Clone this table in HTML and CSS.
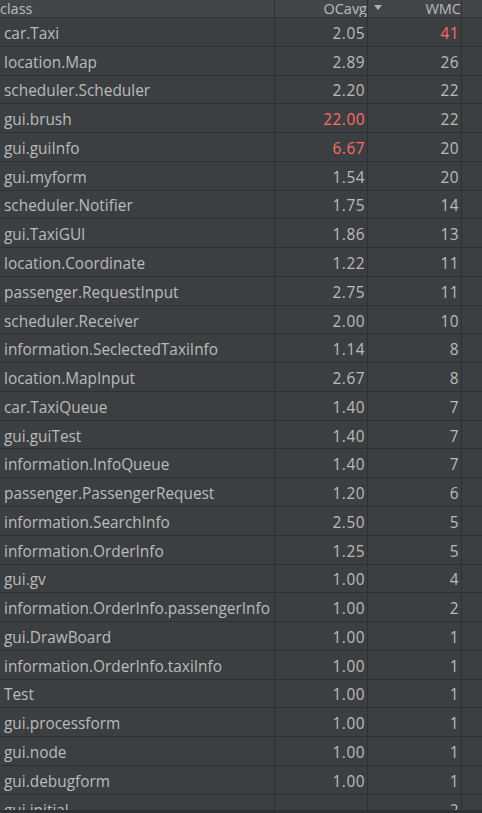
FILE: index.html
```html
<!DOCTYPE html>
<html>
<head>
<meta charset="utf-8">
<link rel="stylesheet" href="styles.css">
</head>
<body>
<div class="table">
  <div class="row head">
    <div class="c name">class</div>
    <div class="c num">OCavg</div>
    <div class="c num wmc-h"><span class="sort"></span><span>WMC</span></div>
    <div class="c rest"></div>
  </div>
  <div class="row"><div class="c name">car.Taxi</div><div class="c num">2.05</div><div class="c num red">41</div><div class="c rest"></div></div>
  <div class="row"><div class="c name">location.Map</div><div class="c num">2.89</div><div class="c num">26</div><div class="c rest"></div></div>
  <div class="row"><div class="c name">scheduler.Scheduler</div><div class="c num">2.20</div><div class="c num">22</div><div class="c rest"></div></div>
  <div class="row"><div class="c name">gui.brush</div><div class="c num red">22.00</div><div class="c num">22</div><div class="c rest"></div></div>
  <div class="row"><div class="c name">gui.guiInfo</div><div class="c num red">6.67</div><div class="c num">20</div><div class="c rest"></div></div>
  <div class="row"><div class="c name">gui.myform</div><div class="c num">1.54</div><div class="c num">20</div><div class="c rest"></div></div>
  <div class="row"><div class="c name">scheduler.Notifier</div><div class="c num">1.75</div><div class="c num">14</div><div class="c rest"></div></div>
  <div class="row"><div class="c name">gui.TaxiGUI</div><div class="c num">1.86</div><div class="c num">13</div><div class="c rest"></div></div>
  <div class="row"><div class="c name">location.Coordinate</div><div class="c num">1.22</div><div class="c num">11</div><div class="c rest"></div></div>
  <div class="row"><div class="c name">passenger.RequestInput</div><div class="c num">2.75</div><div class="c num">11</div><div class="c rest"></div></div>
  <div class="row"><div class="c name">scheduler.Receiver</div><div class="c num">2.00</div><div class="c num">10</div><div class="c rest"></div></div>
  <div class="row"><div class="c name">information.SeclectedTaxiInfo</div><div class="c num">1.14</div><div class="c num">8</div><div class="c rest"></div></div>
  <div class="row"><div class="c name">location.MapInput</div><div class="c num">2.67</div><div class="c num">8</div><div class="c rest"></div></div>
  <div class="row"><div class="c name">car.TaxiQueue</div><div class="c num">1.40</div><div class="c num">7</div><div class="c rest"></div></div>
  <div class="row"><div class="c name">gui.guiTest</div><div class="c num">1.40</div><div class="c num">7</div><div class="c rest"></div></div>
  <div class="row"><div class="c name">information.InfoQueue</div><div class="c num">1.40</div><div class="c num">7</div><div class="c rest"></div></div>
  <div class="row"><div class="c name">passenger.PassengerRequest</div><div class="c num">1.20</div><div class="c num">6</div><div class="c rest"></div></div>
  <div class="row"><div class="c name">information.SearchInfo</div><div class="c num">2.50</div><div class="c num">5</div><div class="c rest"></div></div>
  <div class="row"><div class="c name">information.OrderInfo</div><div class="c num">1.25</div><div class="c num">5</div><div class="c rest"></div></div>
  <div class="row"><div class="c name">gui.gv</div><div class="c num">1.00</div><div class="c num">4</div><div class="c rest"></div></div>
  <div class="row"><div class="c name">information.OrderInfo.passengerInfo</div><div class="c num">1.00</div><div class="c num">2</div><div class="c rest"></div></div>
  <div class="row"><div class="c name">gui.DrawBoard</div><div class="c num">1.00</div><div class="c num">1</div><div class="c rest"></div></div>
  <div class="row"><div class="c name">information.OrderInfo.taxiInfo</div><div class="c num">1.00</div><div class="c num">1</div><div class="c rest"></div></div>
  <div class="row"><div class="c name">Test</div><div class="c num">1.00</div><div class="c num">1</div><div class="c rest"></div></div>
  <div class="row"><div class="c name">gui.processform</div><div class="c num">1.00</div><div class="c num">1</div><div class="c rest"></div></div>
  <div class="row"><div class="c name">gui.node</div><div class="c num">1.00</div><div class="c num">1</div><div class="c rest"></div></div>
  <div class="row"><div class="c name">gui.debugform</div><div class="c num">1.00</div><div class="c num">1</div><div class="c rest"></div></div>
  <div class="row"><div class="c name">gui.initial</div><div class="c num"></div><div class="c num">2</div><div class="c rest"></div></div>
</div>
<div class="bottom"></div>
</body>
</html>
```
FILE: styles.css
```css
html, body {
  margin: 0;
  padding: 0;
  background: #3c3f41;
  width: 482px;
  height: 813px;
  overflow: hidden;
}
.table {
  height: 810px;
  overflow: hidden;
  font-family: "Open Sans", "Noto Sans", sans-serif;
  font-size: 15.4px;
  color: #bbbbbb;
}
.row {
  display: grid;
  grid-template-columns: 275px 93px 94px 20px;
  height: 28.77px;
  box-sizing: border-box;
  border-bottom: 1px solid #2e3032;
  align-items: stretch;
}
.row.head {
  height: 18px;
  background: #434648;
  border-bottom: 1px solid #303234;
  font-size: 14.5px;
}
.c {
  display: flex;
  align-items: center;
  padding-top: 3px;
  border-right: 1px solid #2e3032;
  white-space: nowrap;
  overflow: hidden;
}
.head .c {
  padding-top: 0;
}
.name {
  padding-left: 4px;
}
.head .name {
  padding-left: 0;
}
.num {
  justify-content: flex-end;
  padding-right: 2px;
  letter-spacing: 0.5px;
}
.head .num {
  padding-right: 0;
  letter-spacing: 0;
}
.head .wmc-h {
  justify-content: space-between;
}
.sort {
  width: 0;
  height: 0;
  margin-left: 6px;
  margin-top: -2px;
  border-left: 4.5px solid transparent;
  border-right: 4.5px solid transparent;
  border-top: 5px solid #b0b0b0;
}
.rest {
  border-right: none;
}
.red {
  color: #ff6b68;
}
.bottom {
  height: 3px;
  background: #2e3032;
}
```
